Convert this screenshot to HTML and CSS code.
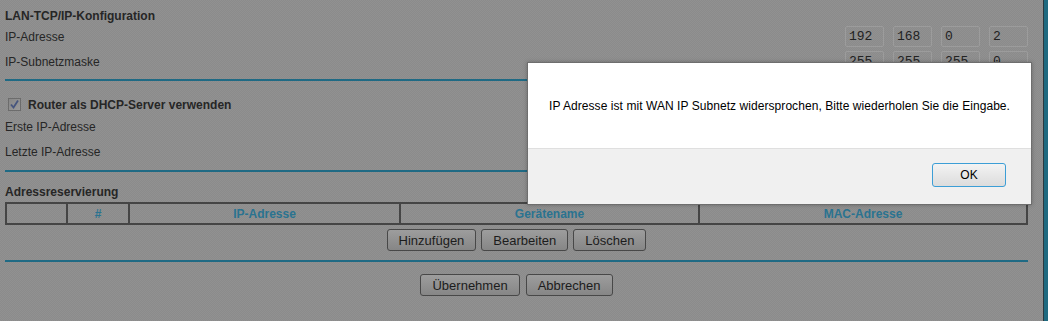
FILE: index.html
```html
<!DOCTYPE html>
<html lang="de">
<head>
<meta charset="UTF-8">
<title>LAN-Einrichtung</title>
<link rel="stylesheet" href="styles.css">
</head>
<body>
<div class="frame">
    <div class="page">
        <div class="section-title">LAN-TCP/IP-Konfiguration</div>
        <div class="row">
            <span>IP-Adresse</span>
            <div class="ip">
                <input value="192"><input value="168"><input value="0"><input value="2">
            </div>
        </div>
        <div class="row">
            <span>IP-Subnetzmaske</span>
            <div class="ip">
                <input value="255"><input value="255"><input value="255"><input value="0">
            </div>
        </div>
        <div class="rule"></div>

        <div class="check-row">
            <span class="checkbox">
                <svg width="11" height="11" viewBox="0 0 11 11"><path d="M2 5.5 L4.5 8.5 L9 1.5" fill="none" stroke="#46557e" stroke-width="1.8"/></svg>
            </span>
            <b>Router als DHCP-Server verwenden</b>
        </div>
        <div class="row">
            <span>Erste IP-Adresse</span>
            <div class="ip">
                <input value="192"><input value="168"><input value="0"><input value="2">
            </div>
        </div>
        <div class="row">
            <span>Letzte IP-Adresse</span>
            <div class="ip">
                <input value="192"><input value="168"><input value="0"><input value="254">
            </div>
        </div>
        <div class="rule rule-b"></div>

        <div class="section-title res-title">Adressreservierung</div>
        <table class="res">
            <colgroup>
                <col style="width:61px"><col style="width:62px"><col style="width:271px"><col style="width:299px"><col>
            </colgroup>
            <tr>
                <th></th>
                <th>#</th>
                <th>IP-Adresse</th>
                <th>Gerätename</th>
                <th>MAC-Adresse</th>
            </tr>
        </table>
        <div class="btn-row">
            <button class="btn">Hinzufügen</button>
            <button class="btn">Bearbeiten</button>
            <button class="btn">Löschen</button>
        </div>
        <div class="rule rule-c"></div>
        <div class="btn-row btn-row-bottom">
            <button class="btn">Übernehmen</button>
            <button class="btn">Abbrechen</button>
        </div>
    </div>
    <div class="edge"></div>
</div>

<div class="dialog">
    <div class="dialog-body">IP Adresse ist mit WAN IP Subnetz widersprochen, Bitte wiederholen Sie die Eingabe.</div>
    <div class="dialog-foot">
        <button class="ok">OK</button>
    </div>
</div>
</body>
</html>
```

FILE: styles.css
```css
html, body {
    margin: 0;
    padding: 0;
    height: 100%;
}
body {
    font-family: Arial, "Liberation Sans", sans-serif;
    font-size: 12px;
    color: #262626;
    background-color: #8e8e8e;
    background-image: repeating-conic-gradient(#8b8b8b 0 25%, #919191 0 50%);
    background-size: 2px 2px;
    overflow: hidden;
}
.frame {
    display: flex;
    height: 100%;
}
.page {
    flex: 1;
    padding: 8px 15px 0 5px;
}
.edge {
    width: 4px;
    border-left: 1px solid #2c3a40;
    background-color: #1f6a80;
}
.section-title {
    font-weight: bold;
    height: 16px;
    line-height: 16px;
}
.row {
    display: flex;
    align-items: center;
    justify-content: space-between;
    height: 25px;
}
.ip {
    display: flex;
    gap: 9px;
}
.ip input {
    width: 39px;
    height: 21px;
    box-sizing: border-box;
    padding: 0 3px;
    border: 1px solid #9c9c9c;
    border-radius: 2px;
    background: transparent;
    font-family: "Liberation Mono", monospace;
    font-size: 13px;
    color: #222;
}
.rule {
    height: 2px;
    margin-top: 5px;
    background-color: #1f6a84;
}
.rule-b {
    margin-top: 6px;
}
.rule-c {
    margin-top: 9px;
}
.check-row {
    display: flex;
    align-items: center;
    height: 19px;
    margin-top: 14px;
    padding-left: 3px;
}
.checkbox {
    width: 11px;
    height: 11px;
    border: 1px solid #6c6c6c;
    background: linear-gradient(135deg, #878787, #9a9a9a);
    margin-right: 7px;
    display: flex;
}
.res-title {
    margin-top: 10px;
    height: 20px;
    line-height: 20px;
}
.res {
    width: 100%;
    table-layout: fixed;
    border-collapse: collapse;
    border: 2px solid #454545;
}
.res th {
    height: 19px;
    padding: 0;
    border: 2px solid #454545;
    color: #2a7390;
    font-size: 12px;
    font-weight: bold;
}
.btn-row {
    display: flex;
    justify-content: center;
    gap: 5px;
    margin-top: 4px;
}
.btn-row-bottom {
    margin-top: 12px;
    gap: 6px;
}
.btn {
    height: 22px;
    padding: 0 11px;
    border: 1px solid #484848;
    border-radius: 3px;
    background: linear-gradient(#9d9d9d, #868686);
    font-family: Arial, "Liberation Sans", sans-serif;
    font-size: 13px;
    color: #1c1c1c;
}

.dialog {
    position: absolute;
    left: 527px;
    top: 62px;
    width: 505px;
    height: 143px;
    box-sizing: border-box;
    border: 1px solid #6e6e6e;
    background-color: #fff;
    box-shadow: 0 0 4px rgba(0, 0, 0, 0.25);
    display: flex;
    flex-direction: column;
}
.dialog-body {
    height: 85px;
    display: flex;
    align-items: center;
    justify-content: center;
    color: #000;
    font-size: 12px;
    letter-spacing: 0.06px;
}
.dialog-foot {
    flex: 1;
    background-color: #f0f0f0;
    border-top: 1px solid #dfdfdf;
    display: flex;
    justify-content: flex-end;
    align-items: flex-start;
    padding: 14px 25px 0 0;
}
.ok {
    width: 74px;
    height: 24px;
    border: 1px solid #3c9ed6;
    border-radius: 3px;
    background: linear-gradient(#f3f3f3, #dcdcdc);
    font-family: Arial, "Liberation Sans", sans-serif;
    font-size: 12px;
    color: #000;
}
```
